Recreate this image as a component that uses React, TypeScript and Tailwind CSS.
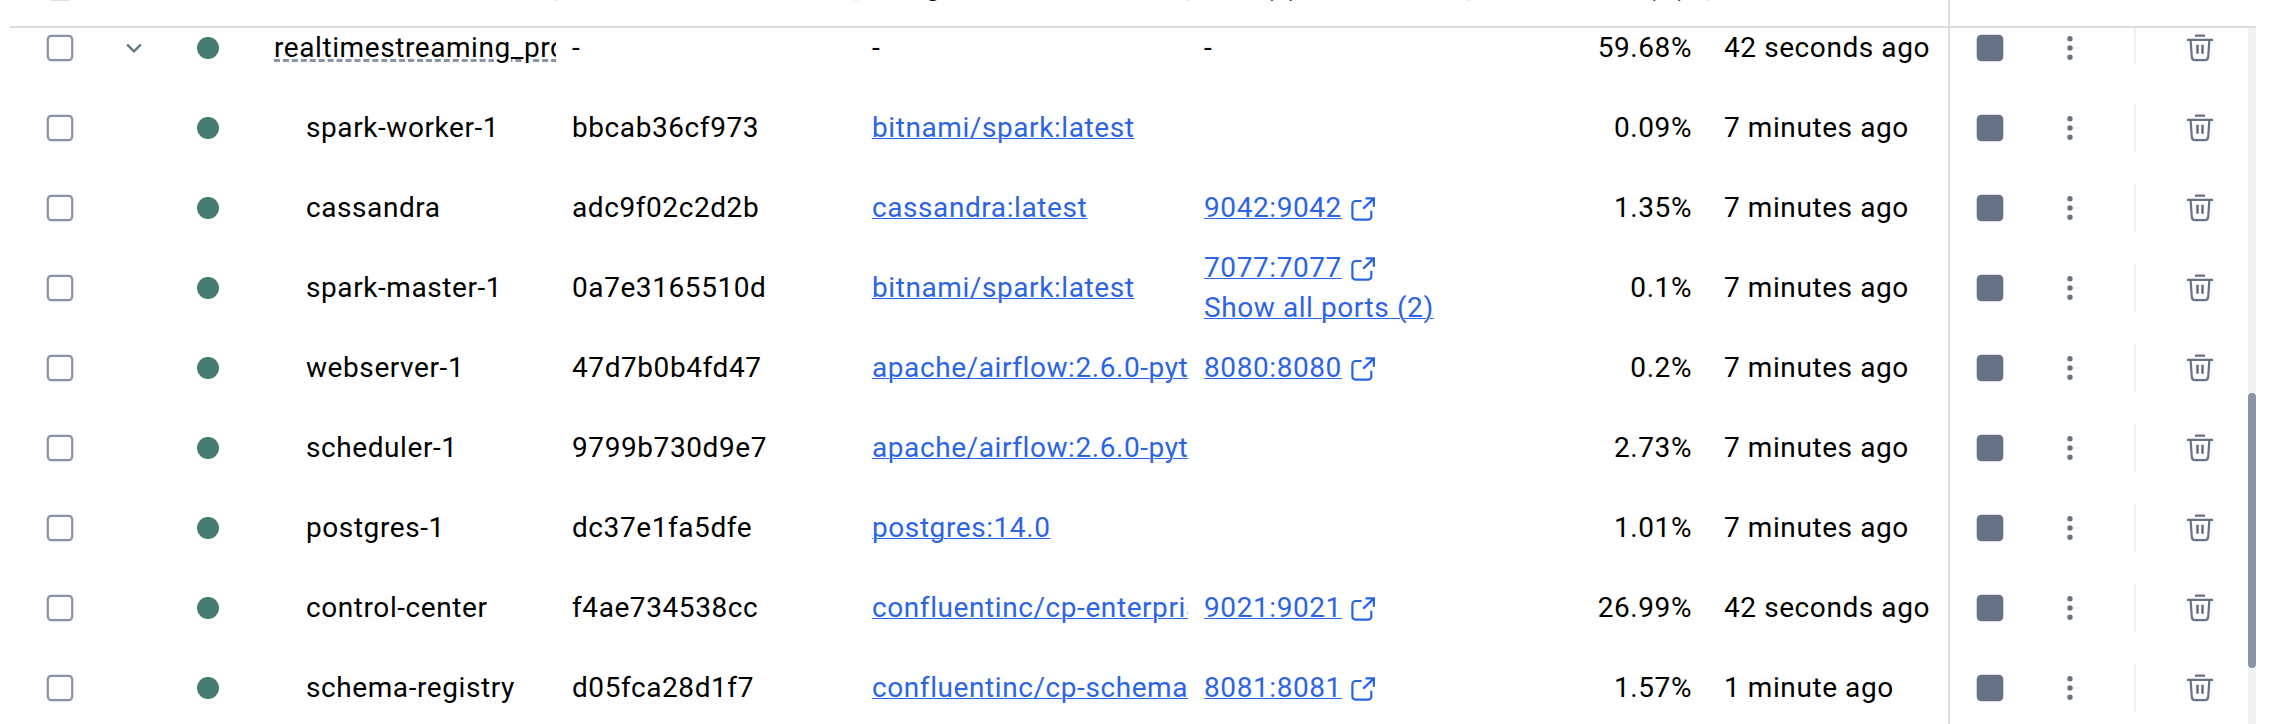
import React from "react";

type Row = {
  name: string;
  id: string;
  image: string;
  ports?: string[];
  cpu: string;
  started: string;
  group?: boolean;
};

const rows: Row[] = [
  { name: "realtimestreaming_pro", id: "-", image: "-", ports: ["-"], cpu: "59.68%", started: "42 seconds ago", group: true },
  { name: "spark-worker-1", id: "bbcab36cf973", image: "bitnami/spark:latest", cpu: "0.09%", started: "7 minutes ago" },
  { name: "cassandra", id: "adc9f02c2d2b", image: "cassandra:latest", ports: ["9042:9042"], cpu: "1.35%", started: "7 minutes ago" },
  { name: "spark-master-1", id: "0a7e3165510d", image: "bitnami/spark:latest", ports: ["7077:7077", "Show all ports (2)"], cpu: "0.1%", started: "7 minutes ago" },
  { name: "webserver-1", id: "47d7b0b4fd47", image: "apache/airflow:2.6.0-pyt", ports: ["8080:8080"], cpu: "0.2%", started: "7 minutes ago" },
  { name: "scheduler-1", id: "9799b730d9e7", image: "apache/airflow:2.6.0-pyt", cpu: "2.73%", started: "7 minutes ago" },
  { name: "postgres-1", id: "dc37e1fa5dfe", image: "postgres:14.0", cpu: "1.01%", started: "7 minutes ago" },
  { name: "control-center", id: "f4ae734538cc", image: "confluentinc/cp-enterpris", ports: ["9021:9021"], cpu: "26.99%", started: "42 seconds ago" },
  { name: "schema-registry", id: "d05fca28d1f7", image: "confluentinc/cp-schema", ports: ["8081:8081"], cpu: "1.57%", started: "1 minute ago" },
];

const link = "text-[#2b64e8] underline decoration-1 underline-offset-[1px]";

function ExternalIcon() {
  return (
    <svg width="26" height="26" viewBox="0 0 26 26" fill="none" stroke="#2b64e8" strokeWidth="2.2" className="mt-[3px] shrink-0">
      <path d="M11.7 5H5.6a3.2 3.2 0 0 0-3.2 3.2v12.2a3.2 3.2 0 0 0 3.2 3.2h12.5a3.2 3.2 0 0 0 3.2-3.2v-5.7" />
      <path d="M15.6 2.4h8.3v8.4M23.7 2.6 13.2 12.6" />
    </svg>
  );
}

function TrashIcon() {
  return (
    <svg width="28" height="28" viewBox="0 0 28 28" fill="none" stroke="#677285" strokeWidth="2.2">
      <path d="M9 1.6h10M1 5.8h26M4.6 6l1.2 16.8a3.6 3.6 0 0 0 3.6 3.3h9.2a3.6 3.6 0 0 0 3.6-3.3l1.2-16.8" />
      <path d="M11.5 10.8v9M16.5 10.8v9" strokeWidth="2.6" />
    </svg>
  );
}

function TableRow({ row }: { row: Row }) {
  return (
    <div className="flex h-20 shrink-0 items-center">
      <div className="flex w-[114px] pl-[46px]">
        <svg width="28" height="28" viewBox="0 0 28 28" fill="none" stroke="#8993a5" strokeWidth="2.2">
          <rect x="1.8" y="1.8" width="24.4" height="24.4" rx="3.6" />
        </svg>
      </div>
      <div className="flex w-[83px] pl-[11px]">
        {row.group && (
          <svg width="18" height="12" viewBox="0 0 18 12" fill="none" stroke="#677285" strokeWidth="2.4">
            <path d="M2.1 2.5 9 9.4l6.9-6.9" />
          </svg>
        )}
      </div>
      <div className="w-[77px]">
        <div className="size-[22px] rounded-full bg-[#457c72]" />
      </div>
      <div className={row.group ? "w-[282px] overflow-hidden pb-px" : "w-[282px] overflow-hidden pb-px pl-8"}>
        {row.group ? (
          <span className="underline decoration-[#8b94a8] decoration-dashed decoration-[3px] underline-offset-[2px]">{row.name}</span>
        ) : (
          row.name
        )}
      </div>
      <div className="w-[316px] pb-px pl-4">{row.id}</div>
      <div className="w-[316px] overflow-hidden pb-px">
        <span className={row.group ? "" : link}>{row.image}</span>
      </div>
      <div className="w-[316px] pb-px pl-4">
        {row.ports?.map((port, i) => (
          <div key={port} className="flex h-10 items-center gap-2">
            <span className={row.group ? "" : link}>{port}</span>
            {!row.group && i === 0 && <ExternalIcon />}
          </div>
        ))}
      </div>
      <div className="w-[188px] pb-px text-right">{row.cpu}</div>
      <div className="w-[256px] pb-px pl-8">{row.started}</div>
      <div className="flex h-20 w-[300px] items-center border-l-2 border-[#dedede] pl-[26px]">
        <svg width="28" height="28" viewBox="0 0 28 28" fill="#677285">
          <rect x="0.7" y="0.7" width="26.6" height="26.6" rx="4.6" />
        </svg>
        <svg width="8" height="26" viewBox="0 0 8 26" fill="#677285" className="ml-[62px]">
          <circle cx="4" cy="3.7" r="2.7" />
          <circle cx="4" cy="13" r="2.7" />
          <circle cx="4" cy="22.3" r="2.7" />
        </svg>
        <div className={row.group ? "-mt-4 ml-[60px] h-12 w-0.5 bg-[#f0f0f0]" : "ml-[60px] h-12 w-0.5 bg-[#f0f0f0]"} />
        <div className="ml-[50px]"><TrashIcon /></div>
      </div>
    </div>
  );
}

function Resizer() {
  return <div className="h-[35px] w-1 shrink-0 bg-[#ececec]" />;
}

export default function App() {
  return (
    <div className="flex h-[724px] w-[2278px] flex-col overflow-hidden bg-white font-[Roboto,sans-serif] text-[28px] leading-10 tracking-[0.58px] whitespace-nowrap text-black">
      <div className="ml-[10px] flex h-7 w-[2246px] shrink-0 overflow-hidden border-b-2 border-[#dedede]">
        <div className="-mt-[34px] flex h-10 w-[1938px] font-medium">
          <div className="w-[544px] pl-[41px]">
            <div className="h-[35px] w-[18px] bg-[#dcdfe5]" />
          </div>
          <Resizer />
          <div className="w-[296px]" />
          <Resizer />
          <div className="w-[328px] pl-[18px]">Image</div>
          <Resizer />
          <div className="w-[277px] pl-[18px]">Port(s)</div>
          <Resizer />
          <div className="w-[235px] pr-[18px] text-right">CPU (%)</div>
          <Resizer />
        </div>
        <div className="w-0.5 bg-[#dedede]" />
      </div>
      <div className="flex min-h-0 grow">
        <div className="flex w-[2248px] flex-col overflow-hidden">
          <div className="-mt-5 flex flex-col">
            {rows.map((row) => (
              <TableRow key={row.name} row={row} />
            ))}
          </div>
        </div>
        <div className="w-2 bg-[#f1f1f1] pt-[365px]">
          <div className="h-[275px] rounded-full bg-[#8993a5]" />
        </div>
      </div>
    </div>
  );
}
